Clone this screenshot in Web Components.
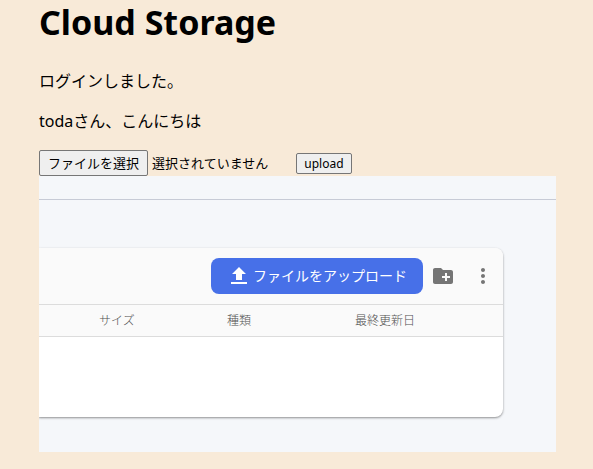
<!DOCTYPE html>
<html lang="ja">
<head>
<meta charset="utf-8">
<meta name="viewport" content="width=device-width, initial-scale=1">
<title>Cloud Storage</title>
<style>
  html { background: #f8ead8; }
  body {
    margin: 0;
    color: #000;
    font: 16px/24px "Noto Sans", "Noto Sans CJK JP", sans-serif;
  }
</style>
</head>
<body>
<storage-page>
  <span slot="title">Cloud Storage</span>
  <span slot="status">ログインしました。</span>
  <span slot="greeting">todaさん、こんにちは</span>
  <upload-form></upload-form>
  <storage-preview></storage-preview>
</storage-page>

<script>
  class StorageElement extends HTMLElement {
    constructor() {
      super();
      this.attachShadow({ mode: 'open' }).innerHTML = this.constructor.markup;
    }
  }

  class StoragePage extends StorageElement {
    static markup = `
      <style>
        :host { display: block; padding: 0 37px 17px 39px; }
        h1 { margin: 0 0 25px; font-size: 34px; line-height: 44px; font-weight: 700; }
        p { margin: 0 0 16px; }
      </style>
      <main>
        <h1><slot name="title"></slot></h1>
        <p><slot name="status"></slot></p>
        <p><slot name="greeting"></slot></p>
        <slot></slot>
      </main>`;
  }

  class UploadForm extends StorageElement {
    static markup = `
      <style>
        :host { display: block; padding-top: 1px; font-size: 13px; line-height: 20px; }
        form { display: flex; align-items: center; gap: 28px; margin: 0; }
        .picker { display: flex; align-items: center; gap: 4px; }
        input {
          position: absolute; width: 1px; height: 1px;
          opacity: 0; overflow: hidden; clip-path: inset(50%);
        }
        button {
          font: inherit; color: #000; background: #efefef; margin: 0;
          border: 1px solid #767676; border-radius: 2px; cursor: pointer;
        }
        .choose { padding: 2px 8px; }
        .send { padding: 0 7px; font-size: 12px; line-height: 19px; }
      </style>
      <form>
        <div class="picker">
          <input type="file" id="file" aria-label="ファイルを選択" tabindex="-1">
          <button type="button" class="choose">ファイルを選択</button>
          <output for="file">選択されていません</output>
        </div>
        <button type="submit" class="send">upload</button>
      </form>`;

    connectedCallback() {
      const root = this.shadowRoot;
      const input = root.querySelector('input');
      root.querySelector('.choose').addEventListener('click', () => input.click());
      input.addEventListener('change', () => {
        root.querySelector('output').textContent = input.files[0]?.name ?? '選択されていません';
      });
      root.querySelector('form').addEventListener('submit', e => e.preventDefault());
    }
  }

  class StoragePreview extends StorageElement {
    static markup = `
      <style>
        :host { display: block; background: #f5f7fa; padding-bottom: 35px; overflow: hidden; }
        .strip { height: 23px; border-bottom: 1px solid #c7cbd6; margin-bottom: 48px; }
      </style>
      <div class="strip"></div>
      <file-card></file-card>`;
  }

  class FileCard extends StorageElement {
    static markup = `
      <style>
        :host {
          display: block; margin-right: 53px; background: #fff; overflow: hidden;
          border-radius: 0 8px 8px 0;
          box-shadow: 0 1px 2px rgba(0,0,0,.3), 0 1px 3px rgba(0,0,0,.15);
        }
        table { width: 100%; table-layout: fixed; border-collapse: separate; border-spacing: 0; }
        th {
          padding: 6px 0 5px; text-align: left; font-size: 12px; line-height: 20px;
          font-weight: 300; color: #505050; background: #fafafa; border-bottom: 1px solid #dcdcdc;
        }
        td { height: 80px; padding: 0; }
        .name { width: 60px; }
        .field { width: 128px; }
      </style>
      <file-toolbar></file-toolbar>
      <table>
        <colgroup><col class="name"><col class="field"><col class="field"><col></colgroup>
        <thead><tr><th></th><th scope="col">サイズ</th><th scope="col">種類</th><th scope="col">最終更新日</th></tr></thead>
        <tbody><tr><td colspan="4"></td></tr></tbody>
      </table>`;
  }

  class FileToolbar extends StorageElement {
    static markup = `
      <style>
        :host {
          display: flex; align-items: center; justify-content: flex-end; gap: 8px;
          padding: 10px 8px 10px 0; background: #fafafa; border-bottom: 1px solid #dcdcdc;
        }
        button {
          display: flex; align-items: center; margin: 0; padding: 0;
          border: 0; background: none; color: #757575; font: inherit; cursor: pointer;
        }
        svg { display: block; width: 24px; height: 24px; fill: currentColor; }
        .upload {
          gap: 2px; padding: 6px 16px; border-radius: 8px; background: #4770e8; color: #fff;
          font-size: 14px; font-weight: 400;
        }
        .actions { display: flex; gap: 16px; }
      </style>
      <button class="upload" type="button">
        <svg viewBox="0 0 24 24" aria-hidden="true"><path d="M9 16h6v-6h4l-7-7-7 7h4v6zm-5 2h16v2H4v-2z"/></svg>
        ファイルをアップロード
      </button>
      <div class="actions">
        <button type="button" aria-label="フォルダを作成">
          <svg viewBox="0 0 24 24" aria-hidden="true"><path d="M20 6h-8l-2-2H4c-1.11 0-1.99.89-1.99 2L2 18c0 1.11.89 2 2 2h16c1.11 0 2-.89 2-2V8c0-1.11-.89-2-2-2zm-1 8h-3v3h-2v-3h-3v-2h3V9h2v3h3v2z"/></svg>
        </button>
        <button type="button" aria-label="その他のオプション">
          <svg viewBox="0 0 24 24" aria-hidden="true"><path d="M12 8c1.1 0 2-.9 2-2s-.9-2-2-2-2 .9-2 2 .9 2 2 2zm0 2c-1.1 0-2 .9-2 2s.9 2 2 2 2-.9 2-2-.9-2-2-2zm0 6c-1.1 0-2 .9-2 2s.9 2 2 2 2-.9 2-2-.9-2-2-2z"/></svg>
        </button>
      </div>`;
  }

  customElements.define('storage-page', StoragePage);
  customElements.define('upload-form', UploadForm);
  customElements.define('file-toolbar', FileToolbar);
  customElements.define('file-card', FileCard);
  customElements.define('storage-preview', StoragePreview);
</script>
</body>
</html>
